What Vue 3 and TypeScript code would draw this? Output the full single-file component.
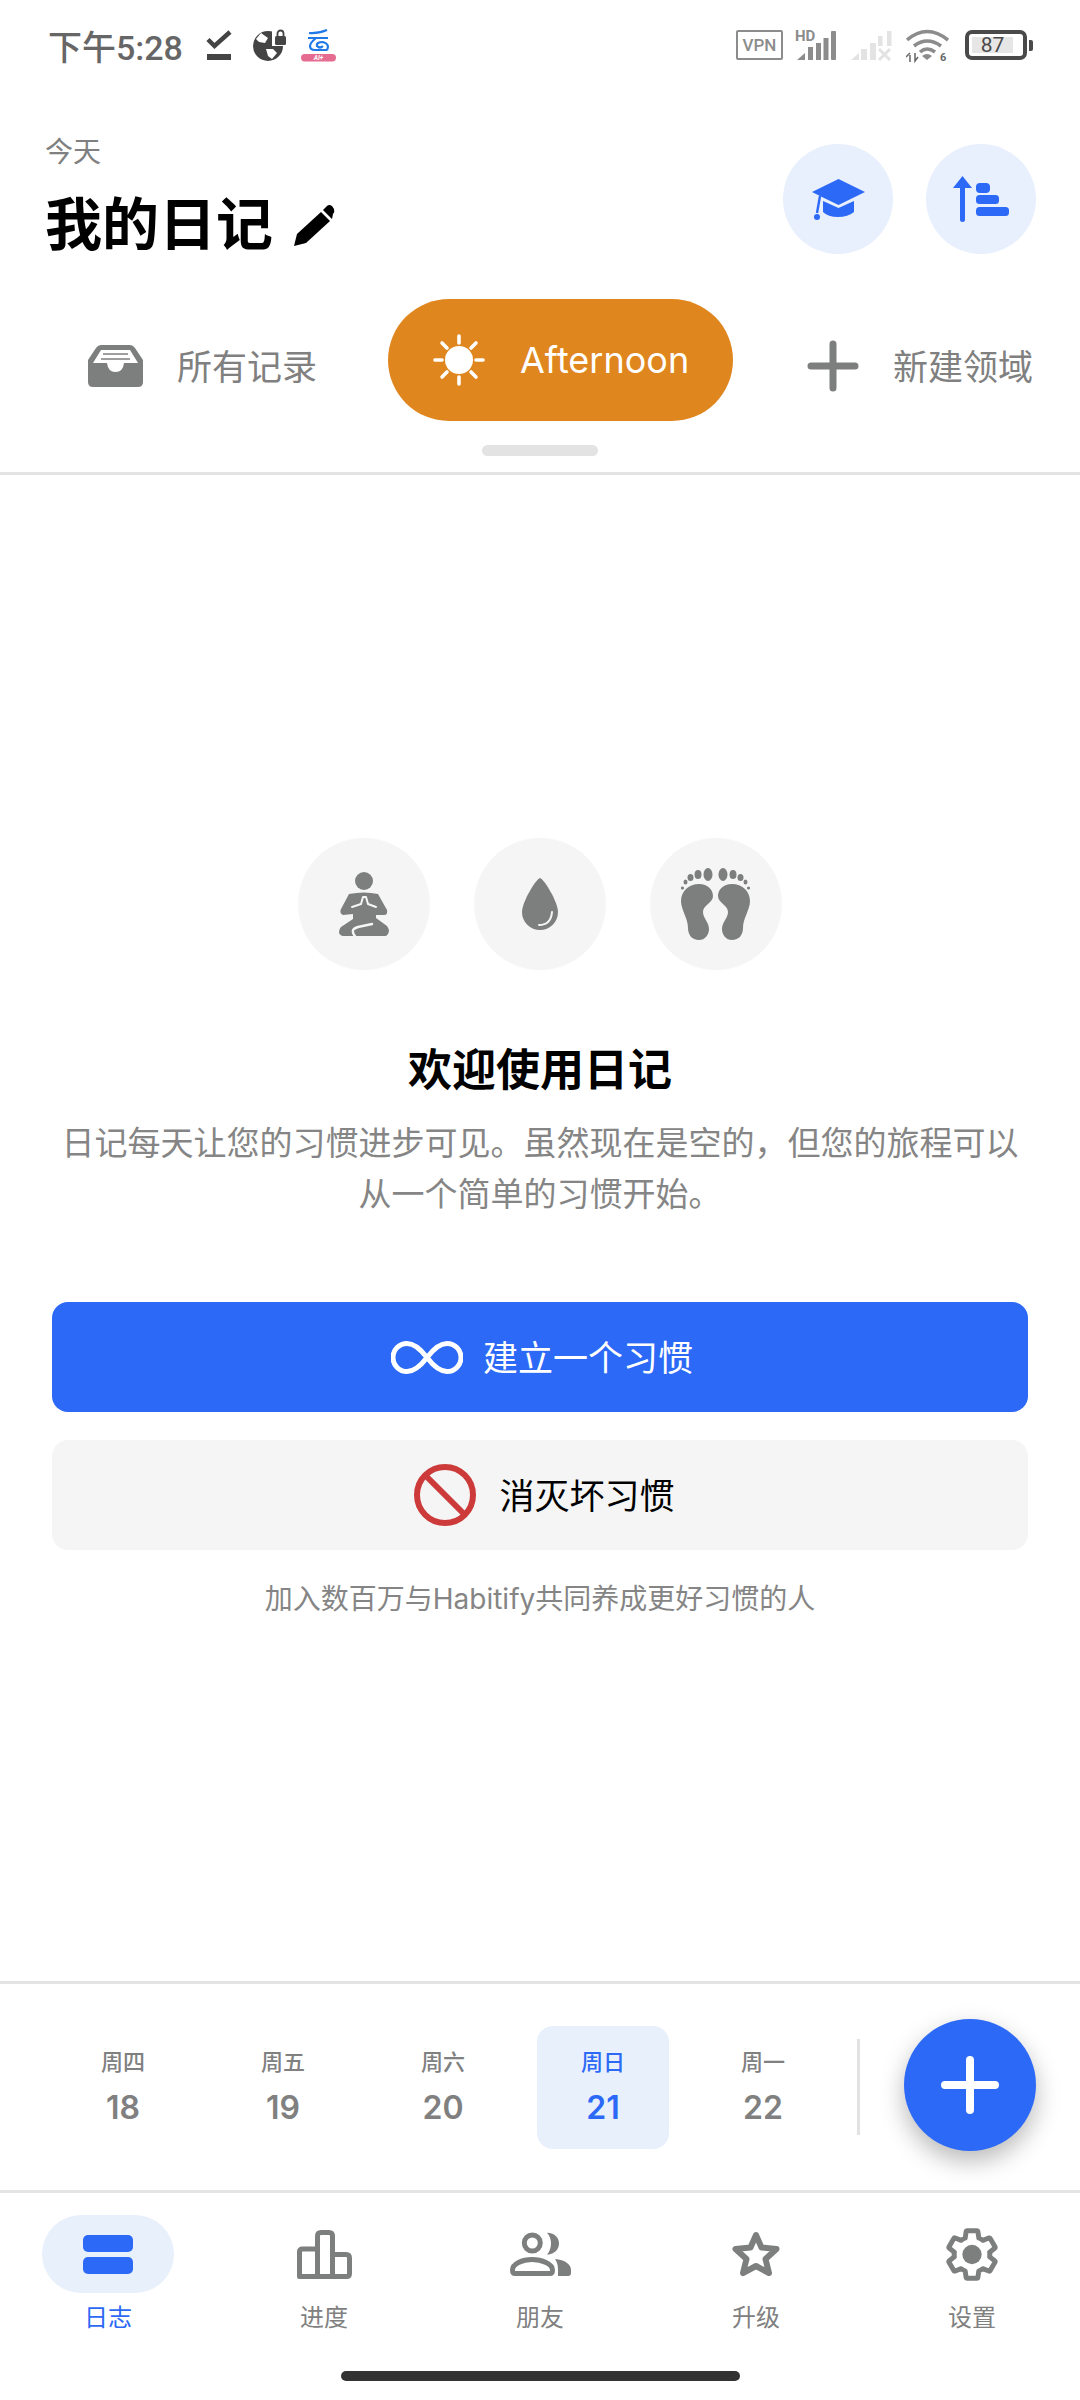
<script setup lang="ts">
import { ref } from 'vue';

// 底部日期条
const days = ref([
  { label: '周四', num: 18, active: false },
  { label: '周五', num: 19, active: false },
  { label: '周六', num: 20, active: false },
  { label: '周日', num: 21, active: true },
  { label: '周一', num: 22, active: false },
]);

const rays = [0, 45, 90, 135, 180, 225, 270, 315];
</script>

<template>
  <div class="page">
    <!-- 状态栏 -->
    <div class="status">
      <span class="clock">下午5:28</span>
      <svg class="st-check" width="26" height="30" viewBox="0 0 26 30">
        <path d="M2 9.5 L8.5 16 L24 2" fill="none" stroke="#444" stroke-width="4.5" />
        <rect x="1" y="24" width="24" height="6" fill="#444" />
      </svg>
      <svg class="st-globe" width="33" height="32" viewBox="0 0 33 32">
        <circle cx="15" cy="17" r="15" fill="#444" />
        <rect x="19" y="0" width="14" height="17" fill="#fff" />
        <path d="M8 4 L15 9 L12 14 L6 13 L3 10 Z M13 20 L20 20 L24 24 L19 30 L15 27 Z" fill="#fff" />
        <path d="M4 12 L9 15 L11 21 L13 30 L6 28 Z" fill="#444" />
        <rect x="22" y="7" width="11" height="9" rx="1.5" fill="#444" />
        <path d="M24.5 8 V4.5 a3 3 0 0 1 6 0 V8" fill="none" stroke="#444" stroke-width="1.8" />
      </svg>
      <svg class="st-yun" width="35" height="33" viewBox="0 0 35 33">
        <path d="M8 4 Q16 5 26 1 M7 9 H27 M15 9 Q9 14 9 17 Q9 21 14 21 H26 M26 21 Q29 15 22 13 Q15 13 16 17 Q19 20 22 17" fill="none" stroke="#1f7ae8" stroke-width="2.2" />
        <rect x="0" y="25" width="35" height="7.5" rx="3.7" fill="#e56b90" />
        <text x="17.5" y="31" text-anchor="middle" font-size="6.5" font-weight="700" font-style="italic" fill="#fff" font-family="Roboto, sans-serif">AI+</text>
      </svg>
      <div class="st-right">
        <span class="vpn">VPN</span>
        <svg class="sig-a" width="42" height="38" viewBox="0 -3 42 38">
          <text x="0" y="12" font-size="15" font-weight="700" fill="#8c8c8c" font-family="Roboto, sans-serif">HD</text>
          <path d="M2 31 L10 24 V31 Z" fill="#8c8c8c" />
          <rect x="13" y="18" width="5" height="13" fill="#8c8c8c" />
          <rect x="21" y="14" width="5" height="17" fill="#8c8c8c" />
          <rect x="28.5" y="9" width="5" height="22" fill="#8c8c8c" />
          <rect x="36" y="2" width="5" height="29" rx="1" fill="#8c8c8c" />
        </svg>
        <svg class="sig-b" width="41" height="32" viewBox="0 0 41 32">
          <path d="M0 31 L8 24 V31 Z" fill="#e3e3e3" />
          <rect x="10" y="20" width="6" height="11" fill="#e3e3e3" />
          <rect x="19" y="14" width="6" height="17" fill="#e3e3e3" />
          <rect x="27" y="7" width="4.5" height="10" fill="#e3e3e3" />
          <rect x="36" y="2" width="4.5" height="15" fill="#e3e3e3" />
          <path d="M28 20 L39 31 M39 20 L28 31" stroke="#e3e3e3" stroke-width="3" />
        </svg>
        <svg class="wifi" width="43" height="36" viewBox="0 0 43 36">
          <path d="M1 11 Q21 -6 42 11 M8 17 Q21 7 35 17 M14 23 Q21 17 29 23" fill="none" stroke="#8c8c8c" stroke-width="3.6" />
          <path d="M16 27 Q21 23 26 27 L21 31 Z" fill="#8c8c8c" />
          <path d="M4 26 V33 M0 28 L4 24 M9 24 V32 L12 28" fill="none" stroke="#666" stroke-width="1.5" />
          <text x="34" y="32" font-size="11" font-weight="700" fill="#666" font-family="Roboto, sans-serif">6</text>
        </svg>
        <div class="battery">
          <div class="cell"><span>87</span></div>
          <i class="nub"></i>
        </div>
      </div>
    </div>

    <!-- 标题区 -->
    <header class="head">
      <div class="titles">
        <div class="today">今天</div>
        <h1>我的日记
          <svg width="41" height="42" viewBox="0 0 41 42">
            <path d="M0 42 L3 30 L27 8 L36 17 L12 39 Z" fill="#000" />
            <path d="M29 6 L33 2 Q35 0 38 2 L40 5 Q41 8 39 10 L38 15 Z" fill="#000" />
          </svg>
        </h1>
      </div>
      <div class="head-btns">
        <button class="round">
          <svg width="53" height="41" viewBox="0 0 53 41">
            <path d="M26.5 0 L53 13 L26.5 26 L10 18 L0 13 Z" fill="#2b69f6" />
            <path d="M11 22 L26.5 29 L42 22 V33 Q36 38 26 38 Q16 38 11 33 Z" fill="#2b69f6" />
            <path d="M8 17 L5 34" stroke="#2b69f6" stroke-width="2.4" />
            <circle cx="5" cy="38" r="3" fill="#2b69f6" />
          </svg>
        </button>
        <button class="round">
          <svg width="56" height="46" viewBox="0 0 56 46">
            <path d="M0 12 L9.5 0 L19 12 H12 V44 a2.5 2 0 0 1 -5 0 V12 Z" fill="#2b69f6" />
            <rect x="23" y="7" width="14" height="10" rx="4" fill="#2b69f6" />
            <rect x="23" y="19" width="23" height="9" rx="3.5" fill="#2b69f6" />
            <rect x="23" y="31" width="33" height="9" rx="3.5" fill="#2b69f6" />
          </svg>
        </button>
      </div>
    </header>

    <!-- 领域标签 -->
    <nav class="areas">
      <div class="area all">
        <svg width="55" height="42" viewBox="0 0 55 42">
          <path d="M13 0 H42 Q45 0 47 3 L55 15 V37 Q55 42 50 42 H5 Q0 42 0 37 V15 L8 3 Q10 0 13 0 Z" fill="#7d7f7e" />
          <path d="M13 5 H42 L50 18 H36 Q35 27 27.5 27 Q20 27 19 18 H5 Z" fill="#fff" />
          <path d="M15 9 H40 M13 14 H42" stroke="#7d7f7e" stroke-width="1.6" />
        </svg>
        <span>所有记录</span>
      </div>
      <div class="area on">
        <svg width="52" height="52" viewBox="0 0 52 52">
          <circle cx="26" cy="26" r="14" fill="#fff" />
          <line v-for="r in rays" :key="r" x1="26" y1="2" x2="26" y2="9" stroke="#fff" stroke-width="3.6" stroke-linecap="round" :transform="`rotate(${r} 26 26)`" />
        </svg>
        <span>Afternoon</span>
      </div>
      <div class="area add">
        <svg width="52" height="52" viewBox="0 0 52 52">
          <path d="M26 4 V48 M4 26 H48" stroke="#7d7f7e" stroke-width="7" stroke-linecap="round" />
        </svg>
        <span>新建领域</span>
      </div>
    </nav>
    <div class="handle"></div>
    <div class="line"></div>

    <!-- 空状态 -->
    <main class="empty">
      <div class="bubbles">
        <div class="bubble">
          <svg width="50" height="64" viewBox="0 0 50 64">
            <circle cx="25" cy="9" r="9" fill="#7d7f7e" />
            <path d="M10 22 Q25 19 39 22 L48 38 Q49 43 45 43 L37 43 V46 L48 54 Q50 57 50 59 Q49 64 46 64 H4 Q0 63 0 60 Q0 57 2 55 L14 47 V42 L4 43 Q0 41 2 37 Z" fill="#7d7f7e" />
            <path d="M13 35 L22 32 L24 25 H27 L29 32 L37 35" fill="none" stroke="#f5f5f5" stroke-width="2" stroke-linejoin="round" stroke-linecap="round" />
            <path d="M33 52 L19 55 Q13 57 14 60 Q14 62 16 64" fill="none" stroke="#f5f5f5" stroke-width="2.4" stroke-linecap="round" />
          </svg>
        </div>
        <div class="bubble">
          <svg width="36" height="52" viewBox="0 0 36 52">
            <path d="M18 0 C22 1 36 24 36 34 A18 18 0 0 1 0 34 C0 24 14 1 18 0 Z" fill="#7d7f7e" />
            <path d="M17 47 Q29 47 30 34" fill="none" stroke="#f5f5f5" stroke-width="2" stroke-linecap="round" />
          </svg>
        </div>
        <div class="bubble">
          <svg width="70" height="72" viewBox="0 0 70 72">
            <g fill="#7d7f7e">
              <path d="M18 16 C27 16 32 22 32 28 C32 35 22 37 22 44 C22 50 28 54 28 61 C28 67 24 72 18 72 C11 72 7 67 7 60 C7 50 0 42 0 33 C0 23 8 16 18 16 Z" />
              <ellipse cx="27" cy="6.5" rx="4.5" ry="6.5" />
              <ellipse cx="17" cy="6.5" rx="3.5" ry="4.5" />
              <ellipse cx="9.5" cy="9.5" rx="3" ry="3.5" />
              <ellipse cx="4.5" cy="14" rx="2" ry="2.5" />
              <circle cx="1.5" cy="20" r="1.6" />
            </g>
            <g fill="#7d7f7e" transform="translate(69 0) scale(-1 1)">
              <path d="M18 16 C27 16 32 22 32 28 C32 35 22 37 22 44 C22 50 28 54 28 61 C28 67 24 72 18 72 C11 72 7 67 7 60 C7 50 0 42 0 33 C0 23 8 16 18 16 Z" />
              <ellipse cx="27" cy="6.5" rx="4.5" ry="6.5" />
              <ellipse cx="17" cy="6.5" rx="3.5" ry="4.5" />
              <ellipse cx="9.5" cy="9.5" rx="3" ry="3.5" />
              <ellipse cx="4.5" cy="14" rx="2" ry="2.5" />
              <circle cx="1.5" cy="20" r="1.6" />
            </g>
          </svg>
        </div>
      </div>
      <h2>欢迎使用日记</h2>
      <p class="desc">日记每天让您的习惯进步可见。虽然现在是空的，但您的旅程可以<br />从一个简单的习惯开始。</p>
      <button class="cta primary">
        <svg width="72" height="33" viewBox="0 0 72 33">
          <path d="M36 16.5 C28 6 22 2.5 16 2.5 A14 14 0 0 0 16 30.5 C22 30.5 28 27 36 16.5 C44 6 50 2.5 56 2.5 A14 14 0 0 1 56 30.5 C50 30.5 44 27 36 16.5 Z" fill="none" stroke="#fff" stroke-width="5" />
        </svg>
        <span>建立一个习惯</span>
      </button>
      <button class="cta ghost">
        <svg width="62" height="62" viewBox="0 0 62 62">
          <circle cx="31" cy="31" r="28" fill="none" stroke="#cc3a3a" stroke-width="6" />
          <path d="M12 12 L50 50" stroke="#cc3a3a" stroke-width="6" />
        </svg>
        <span>消灭坏习惯</span>
      </button>
      <p class="join">加入数百万与Habitify共同养成更好习惯的人</p>
    </main>

    <!-- 日期条 -->
    <section class="dates">
      <div class="day-list">
        <div v-for="d in days" :key="d.num" class="day" :class="{ active: d.active }">
          <span class="dow">{{ d.label }}</span>
          <span class="num">{{ d.num }}</span>
        </div>
      </div>
      <div class="sep"></div>
      <button class="fab">
        <svg width="58" height="58" viewBox="0 0 58 58">
          <path d="M29 4 V54 M4 29 H54" stroke="#fff" stroke-width="8" stroke-linecap="round" />
        </svg>
      </button>
    </section>

    <!-- 底部导航 -->
    <footer class="tabbar">
      <div class="tab active">
        <div class="tab-icon pill">
          <svg width="50" height="39" viewBox="0 0 50 39">
            <rect width="50" height="17" rx="5" fill="#2b69f6" />
            <rect y="22" width="50" height="17" rx="5" fill="#2b69f6" />
          </svg>
        </div>
        <span>日志</span>
      </div>
      <div class="tab">
        <div class="tab-icon">
          <svg width="55" height="49" viewBox="0 0 55 49">
            <path d="M2.5 46.5 V22 Q2.5 19 5.5 19 H20.5 V6 Q20.5 2.5 24 2.5 H32 Q35.5 2.5 35.5 6 V24.5 H49 Q52.5 24.5 52.5 28 V43.5 Q52.5 46.5 49.5 46.5 Z M20.5 19 V46.5 M35.5 24.5 V46.5" fill="none" stroke="#7d7f7e" stroke-width="5" stroke-linejoin="round" />
          </svg>
        </div>
        <span>进度</span>
      </div>
      <div class="tab">
        <div class="tab-icon">
          <svg width="61" height="44" viewBox="0 0 61 44">
            <circle cx="22.3" cy="11" r="8" fill="none" stroke="#7d7f7e" stroke-width="5" />
            <path d="M5 41.5 Q2.5 41.5 2.5 38 C2.5 32 12 27.5 22 27.5 C32 27.5 42.5 32 42.5 38 Q42.5 41.5 40 41.5 Z" fill="none" stroke="#7d7f7e" stroke-width="5" stroke-linejoin="round" />
            <path d="M37 0.7 C45 1 49 6 49 11.5 C49 17 45 22 37 22.7 C40 19 41 15 41 11.5 C41 8 40 4 37 0.7 Z" fill="#7d7f7e" />
            <path d="M45 27 C55 28 61 32 61 38 V41 Q61 44 58 44 H48 V38 C48 33 47 30 45 27 Z" fill="#7d7f7e" />
          </svg>
        </div>
        <span>朋友</span>
      </div>
      <div class="tab">
        <div class="tab-icon">
          <svg width="48" height="46" viewBox="0 0 48 46">
            <path d="M24 4 L29.5 16.5 L44.5 18 L33.5 28 L37 42 L24 35 L11 42 L14.5 28 L3.5 18 L18.5 16.5 Z" fill="none" stroke="#7d7f7e" stroke-width="6" stroke-linejoin="round" />
          </svg>
        </div>
        <span>升级</span>
      </div>
      <div class="tab">
        <div class="tab-icon">
          <svg width="52" height="55" viewBox="1.5 1 21 22">
            <path d="M19.14 12.94c.04-.3.06-.61.06-.94 0-.32-.02-.64-.07-.94l2.03-1.58c.18-.14.23-.41.12-.61l-1.92-3.32c-.12-.22-.37-.29-.59-.22l-2.39.96c-.5-.38-1.03-.7-1.62-.94l-.36-2.54c-.04-.24-.24-.41-.48-.41h-3.84c-.24 0-.43.17-.47.41l-.36 2.54c-.59.24-1.13.57-1.62.94l-2.39-.96c-.22-.08-.47 0-.59.22L2.74 8.87c-.12.21-.08.47.12.61l2.03 1.58c-.05.3-.09.63-.09.94s.02.64.07.94l-2.03 1.58c-.18.14-.23.41-.12.61l1.92 3.32c.12.22.37.29.59.22l2.39-.96c.5.38 1.03.7 1.62.94l.36 2.54c.05.24.24.41.48.41h3.84c.24 0 .44-.17.47-.41l.36-2.54c.59-.24 1.13-.56 1.62-.94l2.39.96c.22.08.47 0 .59-.22l1.92-3.32c.12-.22.07-.47-.12-.61l-2.01-1.58z" fill="none" stroke="#7d7f7e" stroke-width="2" stroke-linejoin="round" />
            <circle cx="12" cy="12" r="3.9" fill="#7d7f7e" />
          </svg>
        </div>
        <span>设置</span>
      </div>
    </footer>
    <div class="homebar"></div>
  </div>
</template>

<style scoped>
* {
  box-sizing: border-box;
}

.page {
  width: 1080px;
  height: 2400px;
  background: #fff;
  display: flex;
  flex-direction: column;
  overflow: hidden;
  font-family: Inter, "Noto Sans CJK SC", sans-serif;
}

button {
  border: none;
  padding: 0;
  font: inherit;
}

/* 状态栏 */
.status {
  height: 90px;
  flex: none;
  display: flex;
  align-items: center;
  padding: 0 47px 0 48px;
}

.clock {
  width: 158px;
  font-family: Roboto, "Noto Sans CJK SC", sans-serif;
  font-size: 34px;
  font-weight: 500;
  color: #666;
  white-space: nowrap;
}

.st-globe {
  margin-left: 21px;
}

.st-yun {
  margin-left: 15px;
}

.st-right {
  margin-left: auto;
  display: flex;
  align-items: center;
}

.sig-a {
  margin-left: 12px;
}

.sig-b {
  margin-left: 14px;
}

.wifi {
  margin: 3px 0 0 14px;
}

.vpn {
  width: 47px;
  height: 30px;
  border: 2px solid #8c8c8c;
  border-radius: 2px;
  font-family: Roboto, sans-serif;
  font-size: 17px;
  font-weight: 500;
  line-height: 26px;
  text-align: center;
  color: #8c8c8c;
}

.battery {
  margin-left: 16px;
  display: flex;
  align-items: center;
  gap: 2px;
}

.cell {
  width: 62px;
  height: 30px;
  border: 4px solid #4a4a4a;
  border-radius: 7px;
  padding: 3px 0 3px 3px;
}

.cell span {
  display: block;
  width: 41px;
  height: 16px;
  background: #e6e6e6;
  font-family: Roboto, sans-serif;
  font-size: 21px;
  line-height: 16px;
  text-align: center;
  color: #4a4a4a;
}

.nub {
  width: 4px;
  height: 11px;
  background: #4a4a4a;
  border-radius: 0 2px 2px 0;
}

/* 标题 */
.head {
  height: 164px;
  flex: none;
  display: flex;
  justify-content: space-between;
  padding: 54px 44px 0 45px;
}

.today {
  margin-top: -10px;
  font-size: 28px;
  line-height: 36px;
  color: #808080;
}

h1 {
  margin: 17px 0 0;
  display: flex;
  align-items: center;
  gap: 21px;
  font-size: 57px;
  font-weight: 700;
  line-height: 76px;
  color: #000;
}

.head-btns {
  display: flex;
  gap: 33px;
}

.round {
  width: 110px;
  height: 110px;
  border-radius: 50%;
  background: #e8effd;
  display: flex;
  align-items: center;
  justify-content: center;
}

/* 领域标签 */
.areas {
  margin-top: 45px;
  height: 122px;
  flex: none;
  display: flex;
  align-items: center;
  color: #808080;
  font-size: 35px;
}

.area {
  display: flex;
  align-items: center;
  white-space: nowrap;
}

.area.all span,
.area.add span {
  margin-top: -3px;
}

.all {
  margin-left: 88px;
  gap: 34px;
  padding-top: 12px;
}

.on {
  margin-left: 71px;
  width: 345px;
  height: 122px;
  border-radius: 61px;
  background: #e0861f;
  color: #fff;
  padding-left: 45px;
  gap: 35px;
  font-size: 36px;
}

.add {
  margin-left: 74px;
  gap: 34px;
  padding-top: 12px;
}

.handle {
  flex: none;
  align-self: center;
  width: 116px;
  height: 11px;
  margin-top: 24px;
  border-radius: 6px;
  background: #e3e3e3;
}

.line {
  flex: none;
  height: 3px;
  margin-top: 16px;
  background: #e4e4e4;
}

/* 空状态 */
.empty {
  flex: 1;
  padding: 363px 52px 0;
  display: flex;
  flex-direction: column;
  align-items: center;
}

.bubbles {
  display: flex;
  gap: 44px;
}

.bubble {
  width: 132px;
  height: 132px;
  border-radius: 50%;
  background: #f5f5f5;
  display: flex;
  align-items: center;
  justify-content: center;
}

h2 {
  margin: 69px 0 0;
  font-size: 44px;
  font-weight: 700;
  line-height: 62px;
  color: #000;
}

.desc {
  margin: 17px -20px 0;
  font-size: 33px;
  line-height: 51px;
  text-align: center;
  color: #858585;
  white-space: nowrap;
}

.cta {
  width: 100%;
  height: 110px;
  flex: none;
  border-radius: 16px;
  display: flex;
  align-items: center;
  justify-content: center;
  font-size: 35px;
}

.cta span {
  margin-top: -3px;
}

.primary {
  margin-top: 82px;
  padding-left: 4px;
  gap: 20px;
  background: #2b69f6;
  color: #fff;
}

.ghost {
  margin-top: 28px;
  padding-left: 9px;
  gap: 23px;
  background: #f5f5f5;
  color: #000;
}

.join {
  margin: 30px 0 0;
  font-size: 28px;
  line-height: 38px;
  color: #858585;
  white-space: nowrap;
}

/* 日期条 */
.dates {
  flex: none;
  height: 209px;
  border-top: 3px solid #e4e4e4;
  padding: 35px 44px 0 57px;
  display: flex;
  align-items: flex-start;
}

.day-list {
  display: flex;
  gap: 28px;
  margin-top: 7px;
}

.day {
  width: 132px;
  height: 123px;
  border-radius: 16px;
  display: flex;
  flex-direction: column;
  align-items: center;
  padding-top: 20px;
  color: #808080;
}

.day.active {
  background: #e8f0fc;
  color: #2b69f6;
}

.dow {
  font-size: 22px;
  font-weight: 500;
  line-height: 32px;
}

.num {
  margin-top: 10px;
  font-size: 32px;
  font-weight: 600;
  line-height: 40px;
}

.sep {
  width: 3px;
  height: 96px;
  margin: 20px 0 0 28px;
  background: #e2e2e2;
}

.fab {
  width: 132px;
  height: 132px;
  margin-left: auto;
  border-radius: 50%;
  background: #2b69f6;
  box-shadow: 0 10px 24px rgba(0, 0, 0, 0.28);
  display: flex;
  align-items: center;
  justify-content: center;
}

/* 底部导航 */
.tabbar {
  flex: none;
  height: 175px;
  border-top: 3px solid #e4e4e4;
  padding-top: 22px;
  display: grid;
  grid-template-columns: repeat(5, 216px);
}

.tab {
  display: flex;
  flex-direction: column;
  align-items: center;
  color: #808080;
  font-size: 24px;
  line-height: 34px;
}

.tab.active {
  color: #2b69f6;
}

.tab-icon {
  width: 132px;
  height: 78px;
  margin-bottom: 8px;
  display: flex;
  align-items: center;
  justify-content: center;
}

.pill {
  border-radius: 39px;
  background: #e8f0fc;
}

.homebar {
  flex: none;
  align-self: center;
  width: 399px;
  height: 10px;
  margin: 6px 0 19px;
  border-radius: 5px;
  background: #333;
}
</style>

<style>
html,
body {
  margin: 0;
  background: #fff;
}
</style>
